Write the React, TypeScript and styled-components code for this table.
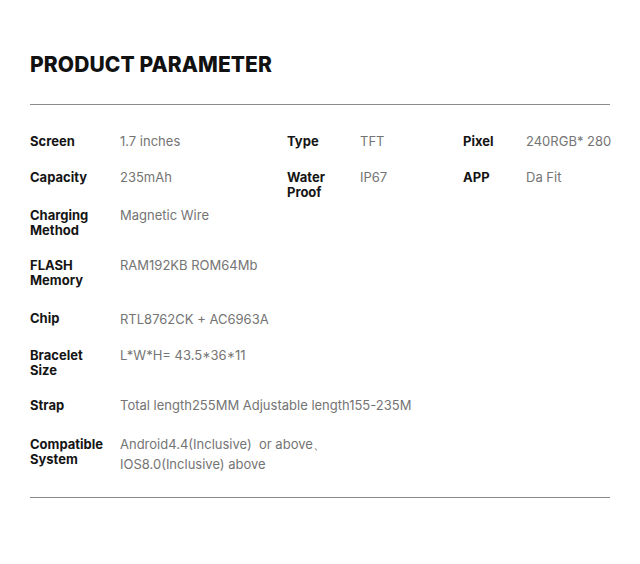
import React from "react";
import styled, { createGlobalStyle } from "styled-components";

const Global = createGlobalStyle`
  html, body { margin: 0; padding: 0; background: #fff; }
  body { font-family: Inter, "Noto Sans", sans-serif; }
`;

const Page = styled.div`
  width: 640px;
  height: 564px;
  padding: 50px 30px 0 30px;
  box-sizing: border-box;
`;

const Title = styled.h1`
  margin: 0;
  font-size: 21px;
  line-height: 30px;
  font-weight: 800;
  color: #111;
  letter-spacing: 0.1px;
`;

const Rule = styled.hr<{ $top: number }>`
  margin: ${(p) => p.$top}px 0 0 0;
  border: none;
  height: 1px;
  background: #8a8a8a;
`;

const Table = styled.div`
  display: flex;
  flex-direction: column;
  padding-top: 29px;
`;

const Row = styled.div<{ $top: number }>`
  display: grid;
  grid-template-columns: 90px 167px 73px 103px 63px 1fr;
  margin-top: ${(p) => p.$top}px;
  align-items: start;
`;

const Label = styled.div`
  font-size: 13px;
  line-height: 15px;
  font-weight: 700;
  color: #151515;
`;

const Value = styled.div<{ $span?: boolean; $dy?: number }>`
  font-size: 13px;
  line-height: 20px;
  font-weight: 400;
  color: #747474;
  margin-top: ${(p) => (p.$dy ?? -3)}px;
  white-space: nowrap;
  grid-column: ${(p) => (p.$span ? "2 / 7" : "auto")};
`;

const Br = () => <br />;

export default function App() {
  return (
    <>
      <Global />
      <Page>
        <Title>PRODUCT PARAMETER</Title>
        <Rule $top={24} />
        <Table>
          <Row $top={0}>
            <Label>Screen</Label>
            <Value>1.7 inches</Value>
            <Label>Type</Label>
            <Value>TFT</Value>
            <Label>Pixel</Label>
            <Value>240RGB* 280</Value>
          </Row>
          <Row $top={19}>
            <Label>Capacity</Label>
            <Value>235mAh</Value>
            <Label>
              Water
              <Br />
              Proof
            </Label>
            <Value>IP67</Value>
            <Label>APP</Label>
            <Value>Da Fit</Value>
          </Row>
          <Row $top={8}>
            <Label>
              Charging
              <Br />
              Method
            </Label>
            <Value $span>Magnetic Wire</Value>
          </Row>
          <Row $top={20}>
            <Label>
              FLASH
              <Br />
              Memory
            </Label>
            <Value $span>RAM192KB ROM64Mb</Value>
          </Row>
          <Row $top={23}>
            <Label>Chip</Label>
            <Value $span $dy={-2}>RTL8762CK + AC6963A</Value>
          </Row>
          <Row $top={19}>
            <Label>
              Bracelet
              <Br />
              Size
            </Label>
            <Value $span>L*W*H= 43.5*36*11</Value>
          </Row>
          <Row $top={20}>
            <Label>Strap</Label>
            <Value $span>Total length255MM Adjustable length155-235M</Value>
          </Row>
          <Row $top={22}>
            <Label>
              Compatible
              <Br />
              System
            </Label>
            <Value $span $dy={-3}>
              Android4.4(Inclusive)&nbsp; or above、
              <Br />
              IOS8.0(Inclusive) above
            </Value>
          </Row>
        </Table>
        <Rule $top={23} />
      </Page>
    </>
  );
}
